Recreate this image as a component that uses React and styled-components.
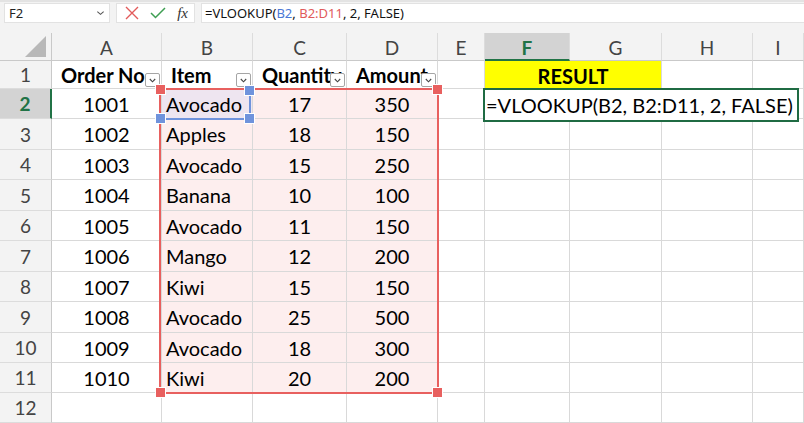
import React from 'react'
import styled, { createGlobalStyle } from 'styled-components'

const GlobalStyle = createGlobalStyle`
  html, body { margin: 0; padding: 0; background: #ffffff; }
  body { font-family: Lato, "Liberation Sans", sans-serif; overflow: hidden; }
`

const COLS = ['A', 'B', 'C', 'D', 'E', 'F', 'G', 'H', 'I']
const ROW_HEIGHTS = [28, 30, 31, 30, 31, 30, 31, 30, 31, 30, 30, 30]

const data = [
  ['1001', 'Avocado', '17', '350'],
  ['1002', 'Apples', '18', '150'],
  ['1003', 'Avocado', '15', '250'],
  ['1004', 'Banana', '10', '100'],
  ['1005', 'Avocado', '11', '150'],
  ['1006', 'Mango', '12', '200'],
  ['1007', 'Kiwi', '15', '150'],
  ['1008', 'Avocado', '25', '500'],
  ['1009', 'Avocado', '18', '300'],
  ['1010', 'Kiwi', '20', '200'],
]

const headers = ['Order No', 'Item', 'Quantity', 'Amount']

export default function App() {
  return (
    <>
      <GlobalStyle />
      <Window>
        <FormulaBar>
          <NameBox>
            <span>F2</span>
            <Chevron viewBox="0 0 10 6"><path d="M1.5 1.5 L5 4.5 L8.5 1.5" /></Chevron>
          </NameBox>
          <ActionBox>
            <svg width="14" height="14" viewBox="0 0 14 14">
              <path d="M1 1 L13 13 M13 1 L1 13" stroke="#e25b5b" strokeWidth="1.4" fill="none" />
            </svg>
            <svg width="16" height="12" viewBox="0 0 16 12">
              <path d="M1 6 L5.5 10.5 L15 1" stroke="#3e9e52" strokeWidth="1.5" fill="none" />
            </svg>
            <Fx>fx</Fx>
          </ActionBox>
          <FormulaInput>
            =VLOOKUP(<Ref $c="#4a78d6">B2</Ref>, <Ref $c="#e15b5b">B2:D11</Ref>, 2, FALSE)
          </FormulaInput>
        </FormulaBar>

        <Sheet>
          <Corner>
            <svg width="22" height="21" viewBox="0 0 22 21">
              <path d="M21 0 L21 21 L0 21 Z" fill="#b8b8b8" />
            </svg>
          </Corner>
          {COLS.map((c) => (
            <ColHead key={c} $active={c === 'F'}>{c}</ColHead>
          ))}

          {ROW_HEIGHTS.map((_, r) => {
            const rowNo = r + 1
            const cells = []
            cells.push(<RowHead key={'h' + r} $active={rowNo === 2}>{rowNo}</RowHead>)
            if (rowNo === 1) {
              headers.forEach((h, i) => {
                cells.push(
                  <Cell key={'c' + i} $bold>
                    <HeadText>{h}</HeadText>
                    <FilterBtn>
                      <svg width="7" height="5" viewBox="0 0 7 5"><path d="M0.8 1 L3.5 3.8 L6.2 1" /></svg>
                    </FilterBtn>
                  </Cell>
                )
              })
              cells.push(<Cell key="e" />)
              cells.push(<Result key="res">RESULT</Result>)
              cells.push(<Cell key="h1" />)
              cells.push(<Cell key="i1" />)
            } else if (rowNo <= 11) {
              const row = data[rowNo - 2]
              row.forEach((v, i) => {
                cells.push(
                  <Cell
                    key={'c' + i}
                    $align={i === 1 ? 'left' : 'center'}
                    $fill={i === 0 ? null : rowNo === 2 && i === 1 ? '#eee5f0' : '#fdeeee'}
                  >
                    {v}
                  </Cell>
                )
              })
              for (let k = 0; k < 5; k++) cells.push(<Cell key={'x' + k} />)
            } else {
              for (let k = 0; k < 9; k++) cells.push(<Cell key={'x' + k} />)
            }
            return cells
          })}

          <RangeBox>
            <Handle $c="#e8605f" style={{ left: -5, top: -5 }} />
            <Handle $c="#e8605f" style={{ right: -5, top: -5 }} />
            <Handle $c="#e8605f" style={{ left: -5, bottom: -5 }} />
            <Handle $c="#e8605f" style={{ right: -5, bottom: -5 }} />
          </RangeBox>
          <RefBox>
            <Handle $c="#6f93dc" style={{ right: -5, top: -4 }} />
            <Handle $c="#6f93dc" style={{ left: -5, bottom: -5 }} />
            <Handle $c="#6f93dc" style={{ right: -5, bottom: -5 }} />
          </RefBox>
          <Editor>=VLOOKUP(B2, B2:D11, 2, FALSE)</Editor>
        </Sheet>
      </Window>
    </>
  )
}

const Window = styled.div`
  width: 804px;
  height: 423px;
  overflow: hidden;
  background: #ffffff;
`

const FormulaBar = styled.div`
  height: 33px;
  box-sizing: border-box;
  background: #f3f3f3;
  border-top: 2px solid #e3e3e3;
  padding: 1px 0 0 4px;
  display: flex;
  align-items: flex-start;
  gap: 6px;
  font-family: "Noto Sans", "Open Sans", sans-serif;
  font-size: 13px;
  color: #222;
`

const NameBox = styled.div`
  width: 106px;
  height: 20px;
  box-sizing: border-box;
  background: #fff;
  border: 1px solid #e2e2e2;
  display: flex;
  align-items: center;
  justify-content: space-between;
  padding: 0 4px 0 4px;
`

const Chevron = styled.svg`
  width: 9px;
  height: 6px;
  path { stroke: #555; stroke-width: 1.2; fill: none; }
`

const ActionBox = styled.div`
  width: 79px;
  height: 20px;
  box-sizing: border-box;
  background: #fff;
  border: 1px solid #e2e2e2;
  display: flex;
  align-items: center;
  justify-content: space-between;
  padding: 0 6px 0 8px;
`

const Fx = styled.span`
  font-family: "Liberation Serif", "DejaVu Serif", serif;
  font-style: italic;
  font-size: 15px;
  color: #333;
`

const FormulaInput = styled.div`
  flex: 1;
  height: 20px;
  box-sizing: border-box;
  background: #fff;
  border-left: 1px solid #e2e2e2;
  border-top: 1px solid #e2e2e2;
  border-bottom: 1px solid #e2e2e2;
  display: flex;
  align-items: center;
  padding-left: 3px;
  white-space: pre;
  color: #111;
`

const Ref = styled.span`
  color: ${(p) => p.$c};
`

const Sheet = styled.div`
  position: relative;
  display: grid;
  grid-template-columns: 52px 110px 91px 94px 91px 47px 85px 92px 91px 51px;
  grid-template-rows: 28px ${ROW_HEIGHTS.map((h) => h + 'px').join(' ')};
`

const Corner = styled.div`
  background: #f3f3f3;
  border-right: 1px solid #c9c9c9;
  border-bottom: 1px solid #c9c9c9;
  display: flex;
  align-items: flex-end;
  justify-content: flex-end;
  padding: 0 4px 3px 0;
`

const ColHead = styled.div`
  box-sizing: border-box;
  background: ${(p) => (p.$active ? '#d3d3d3' : '#f3f3f3')};
  border-right: 1px solid #dcdcdc;
  border-bottom: ${(p) => (p.$active ? '2px solid #217346' : '1px solid #c9c9c9')};
  color: ${(p) => (p.$active ? '#217346' : '#444')};
  font-weight: ${(p) => (p.$active ? 700 : 400)};
  font-size: 19px;
  display: flex;
  align-items: center;
  justify-content: center;
  padding-top: 2px;
`

const RowHead = styled.div`
  box-sizing: border-box;
  background: ${(p) => (p.$active ? '#d3d3d3' : '#f3f3f3')};
  border-right: ${(p) => (p.$active ? '2px solid #217346' : '1px solid #c9c9c9')};
  border-bottom: 1px solid #dcdcdc;
  color: ${(p) => (p.$active ? '#217346' : '#444')};
  font-weight: ${(p) => (p.$active ? 700 : 400)};
  font-size: 19px;
  display: flex;
  align-items: center;
  justify-content: center;
`

const Cell = styled.div`
  position: relative;
  box-sizing: border-box;
  overflow: hidden;
  white-space: nowrap;
  background: ${(p) => p.$fill || '#fff'};
  border-right: 1px solid #d9d9d9;
  border-bottom: 1px solid #d9d9d9;
  font-size: 20px;
  font-weight: ${(p) => (p.$bold ? 700 : 400)};
  color: #000;
  display: flex;
  align-items: center;
  justify-content: ${(p) => (p.$align === 'left' ? 'flex-start' : 'center')};
  padding: 0 4px;
`

const HeadText = styled.span`
  position: absolute;
  left: 9px;
  top: 2px;
`

const FilterBtn = styled.div`
  position: absolute;
  right: 1px;
  bottom: 1px;
  width: 15px;
  height: 14px;
  box-sizing: border-box;
  background: #fff;
  border: 1px solid #a5a5a5;
  border-radius: 2px;
  display: flex;
  align-items: center;
  justify-content: center;
  svg path { stroke: #444; stroke-width: 1.1; fill: none; }
`

const Result = styled.div`
  grid-column: span 2;
  box-sizing: border-box;
  background: #ffff00;
  border-right: 1px solid #d9d9d9;
  border-bottom: 1px solid #d9d9d9;
  font-size: 20px;
  font-weight: 700;
  color: #000;
  display: flex;
  align-items: center;
  justify-content: center;
  padding-top: 2px;
`

const RangeBox = styled.div`
  position: absolute;
  left: 159px;
  top: 55px;
  width: 280px;
  height: 306px;
  box-sizing: border-box;
  border: 2px solid #e8605f;
  pointer-events: none;
`

const RefBox = styled.div`
  position: absolute;
  left: 161px;
  top: 57px;
  width: 90px;
  height: 30px;
  box-sizing: border-box;
  border-bottom: 2px solid #6f93dc;
  border-right: 2px solid #6f93dc;
  pointer-events: none;
`

const Handle = styled.div`
  position: absolute;
  width: 9px;
  height: 9px;
  box-sizing: border-box;
  background: ${(p) => p.$c};
  outline: 1px solid #fff;
`

const Editor = styled.div`
  position: absolute;
  left: 483px;
  top: 55px;
  width: 316px;
  height: 34px;
  box-sizing: border-box;
  border: 2px solid #1f6b43;
  background: #fff;
  font-size: 20px;
  color: #000;
  display: flex;
  align-items: center;
  padding-left: 1px;
  white-space: nowrap;
`
